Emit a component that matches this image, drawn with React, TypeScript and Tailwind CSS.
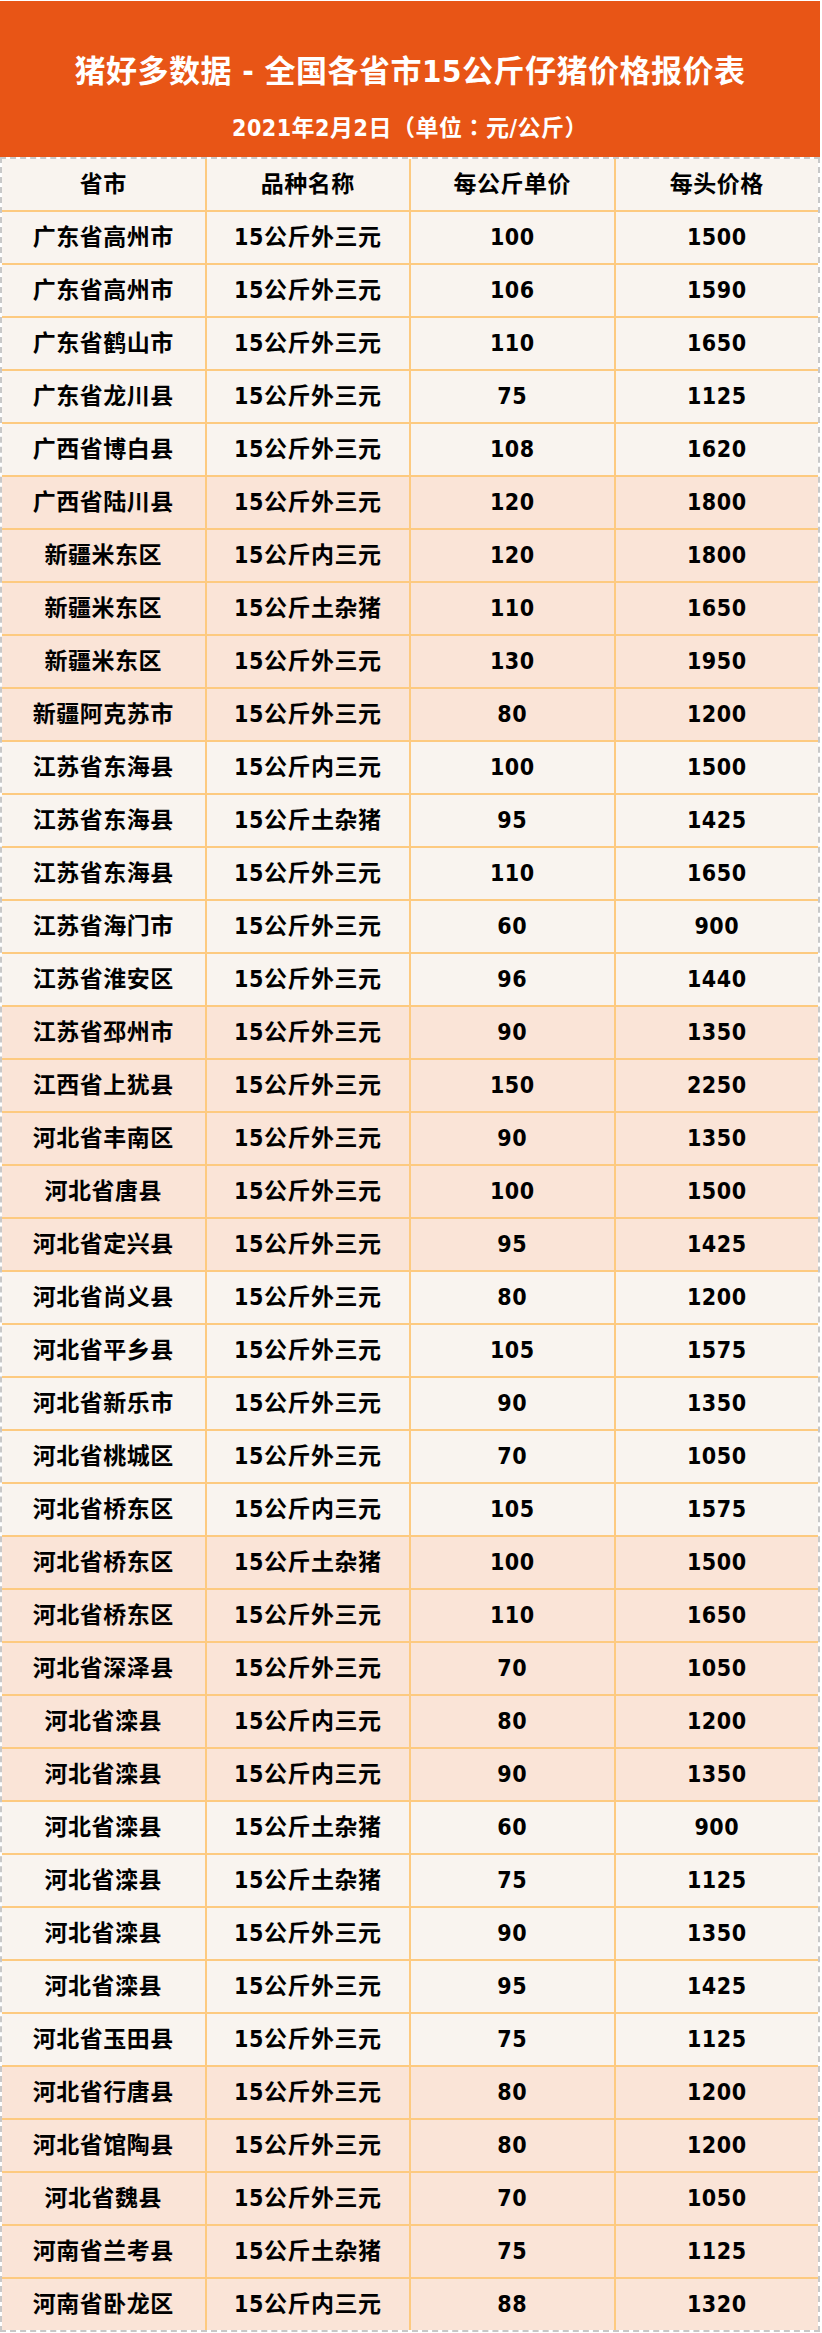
const rows: [string, string, string, string][] = [
  ["广东省高州市", "15公斤外三元", "100", "1500"],
  ["广东省高州市", "15公斤外三元", "106", "1590"],
  ["广东省鹤山市", "15公斤外三元", "110", "1650"],
  ["广东省龙川县", "15公斤外三元", "75", "1125"],
  ["广西省博白县", "15公斤外三元", "108", "1620"],
  ["广西省陆川县", "15公斤外三元", "120", "1800"],
  ["新疆米东区", "15公斤内三元", "120", "1800"],
  ["新疆米东区", "15公斤土杂猪", "110", "1650"],
  ["新疆米东区", "15公斤外三元", "130", "1950"],
  ["新疆阿克苏市", "15公斤外三元", "80", "1200"],
  ["江苏省东海县", "15公斤内三元", "100", "1500"],
  ["江苏省东海县", "15公斤土杂猪", "95", "1425"],
  ["江苏省东海县", "15公斤外三元", "110", "1650"],
  ["江苏省海门市", "15公斤外三元", "60", "900"],
  ["江苏省淮安区", "15公斤外三元", "96", "1440"],
  ["江苏省邳州市", "15公斤外三元", "90", "1350"],
  ["江西省上犹县", "15公斤外三元", "150", "2250"],
  ["河北省丰南区", "15公斤外三元", "90", "1350"],
  ["河北省唐县", "15公斤外三元", "100", "1500"],
  ["河北省定兴县", "15公斤外三元", "95", "1425"],
  ["河北省尚义县", "15公斤外三元", "80", "1200"],
  ["河北省平乡县", "15公斤外三元", "105", "1575"],
  ["河北省新乐市", "15公斤外三元", "90", "1350"],
  ["河北省桃城区", "15公斤外三元", "70", "1050"],
  ["河北省桥东区", "15公斤内三元", "105", "1575"],
  ["河北省桥东区", "15公斤土杂猪", "100", "1500"],
  ["河北省桥东区", "15公斤外三元", "110", "1650"],
  ["河北省深泽县", "15公斤外三元", "70", "1050"],
  ["河北省滦县", "15公斤内三元", "80", "1200"],
  ["河北省滦县", "15公斤内三元", "90", "1350"],
  ["河北省滦县", "15公斤土杂猪", "60", "900"],
  ["河北省滦县", "15公斤土杂猪", "75", "1125"],
  ["河北省滦县", "15公斤外三元", "90", "1350"],
  ["河北省滦县", "15公斤外三元", "95", "1425"],
  ["河北省玉田县", "15公斤外三元", "75", "1125"],
  ["河北省行唐县", "15公斤外三元", "80", "1200"],
  ["河北省馆陶县", "15公斤外三元", "80", "1200"],
  ["河北省魏县", "15公斤外三元", "70", "1050"],
  ["河南省兰考县", "15公斤土杂猪", "75", "1125"],
  ["河南省卧龙区", "15公斤内三元", "88", "1320"],
];

const headers = ["省市", "品种名称", "每公斤单价", "每头价格"];

const font = {
  fontFamily: '"DejaVu Sans Condensed", "Noto Sans CJK SC", sans-serif',
};

// centred full-width colon, as in the original artwork
const tcColon = { fontFamily: '"Noto Sans CJK TC", sans-serif' };

export default function App() {
  return (
    <div className="w-[822px] bg-white pt-px" style={font}>
      <div className="w-[820px]">
        <div className="h-[156px] bg-[#e85516] flex flex-col items-center text-white font-bold">
          <h1 className="mt-[50px] text-[31px] leading-[40px] tracking-[0.5px]">
            猪好多数据 - 全国各省市15公斤仔猪价格报价表
          </h1>
          <p className="mt-[22px] text-[23px] leading-[26px] tracking-[0.5px]">
            2021年2月2日（单位<span style={tcColon}>：</span>元/公斤）
          </p>
        </div>

        <div className="grid grid-cols-4 auto-rows-[51px] gap-[2px] bg-[#fdca80] bg-clip-padding border-2 border-dashed border-[#c8c8c8]">
          {headers.map((h) => (
            <div
              key={h}
              className="bg-[#f9f4ef] flex items-center justify-center text-[23px] font-bold tracking-[0.5px] text-black"
            >
              {h}
            </div>
          ))}
          {rows.map((r, i) =>
            r.map((cell, j) => (
              <div
                key={i + "-" + j}
                className={
                  (Math.floor(i / 5) % 2 === 0 ? "bg-[#f9f4ef]" : "bg-[#fae4d7]") +
                  " flex items-center justify-center text-[23px] font-bold tracking-[0.5px] text-black"
                }
              >
                {cell}
              </div>
            ))
          )}
        </div>
      </div>
    </div>
  );
}
